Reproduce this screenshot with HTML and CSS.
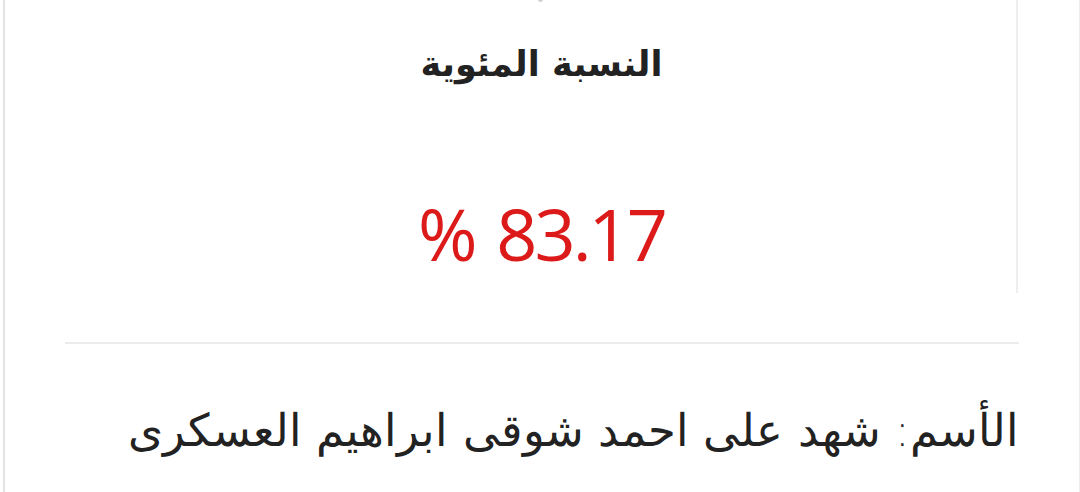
FILE: index.html
```html
<!DOCTYPE html>
<html lang="ar">
<head>
<meta charset="utf-8">
<link rel="stylesheet" href="styles.css">
</head>
<body>
<div class="frame">
  <div class="page">
    <section class="stat">
      <span class="dot"></span>
      <h2 class="stat-title" dir="rtl">النسبة المئوية</h2>
      <div class="stat-value">% <span class="stat-num">83.17</span></div>
    </section>
    <hr class="divider">
    <p class="name" dir="rtl">الأسم: شهد على احمد شوقى ابراهيم العسكرى</p>
  </div>
</div>
</body>
</html>
```
FILE: styles.css
```css
html, body {
  margin: 0;
  padding: 0;
  background: #ffffff;
  width: 1080px;
  height: 492px;
  overflow: hidden;
}
.frame {
  box-sizing: border-box;
  width: 1080px;
  height: 492px;
  padding-left: 3px;
  border-right: 1px solid #ececec;
}
.page {
  box-sizing: border-box;
  width: 1018px;
  height: 100%;
  border-left: 2px solid #e4e4e4;
  display: flex;
  flex-direction: column;
}
.stat {
  position: relative;
  box-sizing: border-box;
  width: 1013px;
  height: 293px;
  border-right: 2px solid #eeeeee;
  display: flex;
  flex-direction: column;
  align-items: center;
  padding-left: 62px;
}
.dot {
  position: absolute;
  top: -3px;
  left: 533px;
  width: 5px;
  height: 5px;
  border-radius: 50%;
  background: #cfcfcf;
}
.stat-title {
  margin: 38px 0 0;
  font-family: "DejaVu Sans", sans-serif;
  font-weight: bold;
  font-size: 35px;
  line-height: 52px;
  color: #222222;
}
.stat-value {
  margin-top: 98px;
  font-family: "Open Sans", "Noto Sans", sans-serif;
  font-size: 72px;
  line-height: 90px;
  color: #dc1a1a;
  white-space: nowrap;
}
.stat-num {
  letter-spacing: -3px;
}
.divider {
  box-sizing: border-box;
  width: 954px;
  margin: 49px 0 0 60px;
  border: 0;
  height: 2px;
  background: #ececec;
}
.name {
  margin: 59px 0 0 0;
  width: 1014px;
  text-align: right;
  font-family: "DejaVu Sans", sans-serif;
  font-weight: 300;
  font-size: 45px;
  line-height: 56px;
  letter-spacing: 0.3px;
  color: #222222;
}
```
